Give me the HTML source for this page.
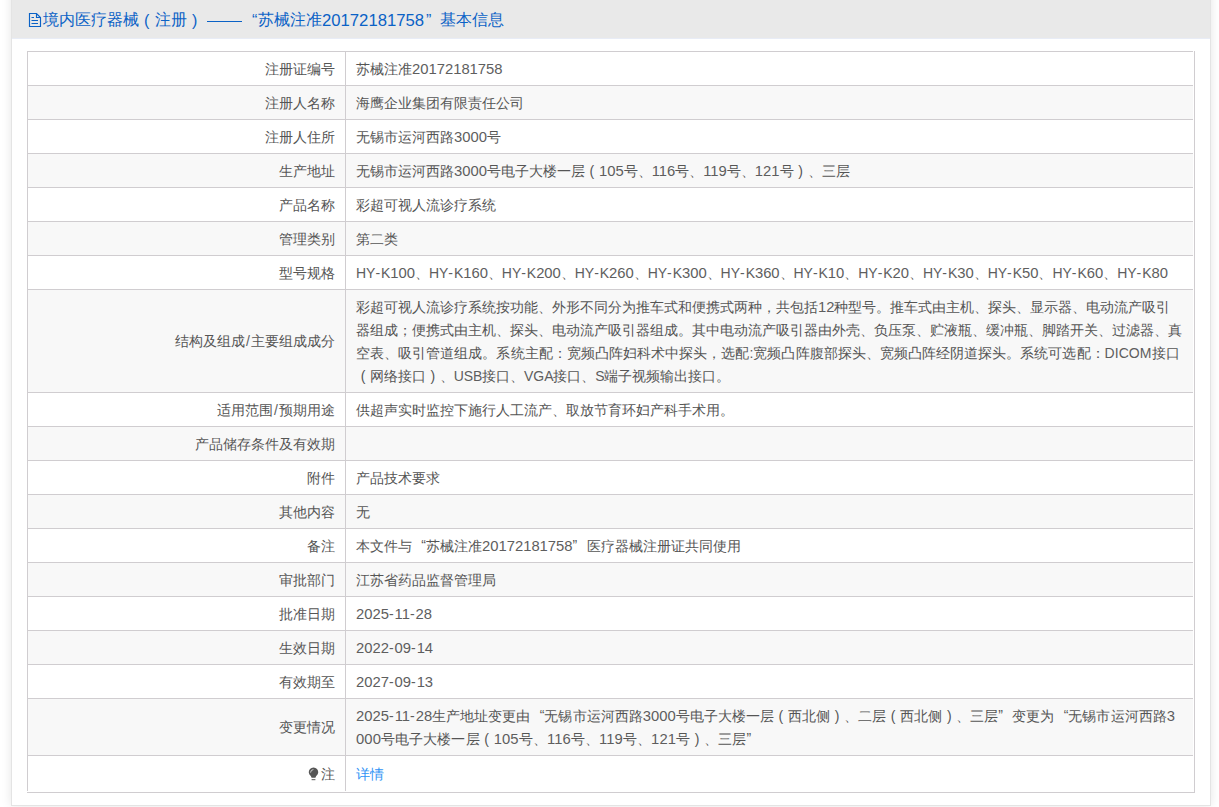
<!DOCTYPE html>
<html><head><meta charset="utf-8">
<style>
html,body{margin:0;padding:0;background:#fff;width:1219px;height:807px;overflow:hidden;font-family:"Liberation Sans",sans-serif;}
.panel{position:absolute;left:11px;top:-20px;width:1198px;height:824px;background:#fff;border:1px solid #e4e4e4;box-shadow:0 0 10px rgba(0,0,0,.1);}
.hdr{position:absolute;left:0;top:19px;width:1198px;height:38px;background:#e9e9e9;border-bottom:1px solid #e8ecf6;}
.ttl{position:absolute;left:-12px;top:0;width:1198px;height:38px;font-size:16px;color:#0b62c6;white-space:nowrap;}
.ttl>span{position:absolute;top:8px;line-height:24px;}
.doc{position:absolute;left:24px;top:8px;}
.tl{font-size:16px;}
.dash{left:207px;width:35px;top:21px !important;height:1.3px;background:#0b62c6;}
.tbl{position:absolute;left:27px;top:51px;width:1167px;height:741px;border-right:1px solid #d0cdd0;border-bottom:1px solid #d0cdd0;}
.row{position:absolute;left:0;width:1165px;border-top:1px solid #d0cdd0;border-left:1px solid #d0cdd0;}
.row.g{background:#f8f8f8;}
.lab{position:absolute;left:0;top:0;width:317px;height:100%;text-align:right;}
.val{position:absolute;left:317px;top:0;right:0;height:100%;border-left:1px solid #d0cdd0;}
.t{position:absolute;font-size:14px;color:#555;line-height:23px;white-space:nowrap;}
.lab .t{right:10px;top:6px;}
.val .t{left:10px;top:6px;}
.l{font-size:14.7px;}
.ql,.qr,.pl,.pr{display:inline-block;width:14px;}
.ql{text-align:right;}
.qr{text-align:left;}
.pl,.pr{text-align:center;}
.link{color:#2f93f5;}
.bulb{position:absolute;left:279px;top:10px;}
.d{font-size:14.8px;}
.h{letter-spacing:0.95px;}
.tl .d{font-size:16.7px;}

.tq{font-size:16px;}
.tp{font-size:16px;}
.ql,.qr{position:relative;top:-1px;}
.ttl>span.tl,.ttl>span.tq,.ttl>span.tp{top:9px;}
.sl{margin:0 1.2px;}
.t .a{color:#5e5e5e;}
.link .a{color:inherit}

</style></head><body>
<div class="panel">
 <div class="hdr"><div class="ttl">
<svg class="doc" width="24" height="24" viewBox="0 0 24 24"><path d="M5.5 5.5H12.5L16.5 9.5V18.5H5.5Z M12.5 5.5V9.5H16.5 M7.5 9.5H10 M7.5 12.5H14 M7.5 15.5H14" fill="none" stroke="#0b62c6" stroke-width="1.15"/></svg>
<span class="tt" style="left:43px">境内医疗器械</span>
<span class="tp" style="left:144px">(</span>
<span class="tt" style="left:155px">注册</span>
<span class="tp" style="left:192px">)</span>
<span class="dash"></span>
<span class="tq" style="left:252px">“</span>
<span class="tt" style="left:258px">苏械注准</span>
<span class="tl" style="left:322px"><span class="d">20172181758</span></span>
<span class="tq" style="left:426px">”</span>
<span class="tt" style="left:440px">基本信息</span>
</div></div>
</div>
<div class="tbl">
<div class="row" style="top:0px;height:33px"><div class="lab"><span class="t" style="top:6px">注册证编号</span></div><div class="val"><span class="t">苏械注准<span class="a"><span class="d">20172181758</span></span></span></div></div>
<div class="row g" style="top:34px;height:33px"><div class="lab"><span class="t" style="top:6px">注册人名称</span></div><div class="val"><span class="t">海鹰企业集团有限责任公司</span></div></div>
<div class="row" style="top:68px;height:33px"><div class="lab"><span class="t" style="top:6px">注册人住所</span></div><div class="val"><span class="t">无锡市运河西路<span class="a"><span class="d">3000</span></span>号</span></div></div>
<div class="row g" style="top:102px;height:33px"><div class="lab"><span class="t" style="top:6px">生产地址</span></div><div class="val"><span class="t">无锡市运河西路<span class="a"><span class="d">3000</span></span>号电子大楼一层<span class="pl">(</span><span class="a"><span class="d">105</span></span>号、<span class="a"><span class="d">116</span></span>号、<span class="a"><span class="d">119</span></span>号、<span class="a"><span class="d">121</span></span>号<span class="pr">)</span>、三层</span></div></div>
<div class="row" style="top:136px;height:33px"><div class="lab"><span class="t" style="top:6px">产品名称</span></div><div class="val"><span class="t">彩超可视人流诊疗系统</span></div></div>
<div class="row g" style="top:170px;height:33px"><div class="lab"><span class="t" style="top:6px">管理类别</span></div><div class="val"><span class="t">第二类</span></div></div>
<div class="row" style="top:204px;height:33px"><div class="lab"><span class="t" style="top:6px">型号规格</span></div><div class="val"><span class="t"><span style="letter-spacing:-0.03px"><span class="a">HY<span class="h">-</span>K<span class="d">100</span></span>、<span class="a">HY<span class="h">-</span>K<span class="d">160</span></span>、<span class="a">HY<span class="h">-</span>K<span class="d">200</span></span>、<span class="a">HY<span class="h">-</span>K<span class="d">260</span></span>、<span class="a">HY<span class="h">-</span>K<span class="d">300</span></span>、<span class="a">HY<span class="h">-</span>K<span class="d">360</span></span>、<span class="a">HY<span class="h">-</span>K<span class="d">10</span></span>、<span class="a">HY<span class="h">-</span>K<span class="d">20</span></span>、<span class="a">HY<span class="h">-</span>K<span class="d">30</span></span>、<span class="a">HY<span class="h">-</span>K<span class="d">50</span></span>、<span class="a">HY<span class="h">-</span>K<span class="d">60</span></span>、<span class="a">HY<span class="h">-</span>K<span class="d">80</span></span></span></span></div></div>
<div class="row g" style="top:238px;height:102px"><div class="lab"><span class="t" style="top:40px">结构及组成<span class="a"><span class="sl">/</span></span>主要组成成分</span></div><div class="val"><span class="t">彩超可视人流诊疗系统按功能、外形不同分为推车式和便携式两种，共包括<span class="a"><span class="d">12</span></span>种型号。推车式由主机、探头、显示器、电动流产吸引<br>器组成；便携式由主机、探头、电动流产吸引器组成。其中电动流产吸引器由外壳、负压泵、贮液瓶、缓冲瓶、脚踏开关、过滤器、真<br><span style="letter-spacing:0.05px">空表、吸引管道组成。系统主配：宽频凸阵妇科术中探头，选配<span class="a">:</span>宽频凸阵腹部探头、宽频凸阵经阴道探头。系统可选配：<span class="a">DICOM</span>接口</span><br><span style="letter-spacing:-0.07px"><span class="pl">(</span>网络接口<span class="pr">)</span>、<span class="a">USB</span>接口、<span class="a">VGA</span>接口、<span class="a">S</span>端子视频输出接口。</span></span></div></div>
<div class="row" style="top:341px;height:33px"><div class="lab"><span class="t" style="top:6px">适用范围<span class="a"><span class="sl">/</span></span>预期用途</span></div><div class="val"><span class="t">供超声实时监控下施行人工流产、取放节育环妇产科手术用。</span></div></div>
<div class="row g" style="top:375px;height:33px"><div class="lab"><span class="t" style="top:6px">产品储存条件及有效期</span></div><div class="val"><span class="t"></span></div></div>
<div class="row" style="top:409px;height:33px"><div class="lab"><span class="t" style="top:6px">附件</span></div><div class="val"><span class="t">产品技术要求</span></div></div>
<div class="row g" style="top:443px;height:33px"><div class="lab"><span class="t" style="top:6px">其他内容</span></div><div class="val"><span class="t">无</span></div></div>
<div class="row" style="top:477px;height:33px"><div class="lab"><span class="t" style="top:6px">备注</span></div><div class="val"><span class="t">本文件与<span class="ql">“</span>苏械注准<span class="a"><span class="d">20172181758</span></span><span class="qr">”</span>医疗器械注册证共同使用</span></div></div>
<div class="row g" style="top:511px;height:33px"><div class="lab"><span class="t" style="top:6px">审批部门</span></div><div class="val"><span class="t">江苏省药品监督管理局</span></div></div>
<div class="row" style="top:545px;height:33px"><div class="lab"><span class="t" style="top:6px">批准日期</span></div><div class="val"><span class="t"><span class="a"><span class="d">2025</span><span class="h">-</span><span class="d">11</span><span class="h">-</span><span class="d">28</span></span></span></div></div>
<div class="row g" style="top:579px;height:33px"><div class="lab"><span class="t" style="top:6px">生效日期</span></div><div class="val"><span class="t"><span class="a"><span class="d">2022</span><span class="h">-</span><span class="d">09</span><span class="h">-</span><span class="d">14</span></span></span></div></div>
<div class="row" style="top:613px;height:33px"><div class="lab"><span class="t" style="top:6px">有效期至</span></div><div class="val"><span class="t"><span class="a"><span class="d">2027</span><span class="h">-</span><span class="d">09</span><span class="h">-</span><span class="d">13</span></span></span></div></div>
<div class="row g" style="top:647px;height:56px"><div class="lab"><span class="t" style="top:17px">变更情况</span></div><div class="val"><span class="t"><span style="letter-spacing:0.03px"><span class="a"><span class="d">2025</span><span class="h">-</span><span class="d">11</span><span class="h">-</span><span class="d">28</span></span>生产地址变更由<span class="ql">“</span>无锡市运河西路<span class="a"><span class="d">3000</span></span>号电子大楼一层<span class="pl">(</span>西北侧<span class="pr">)</span>、二层<span class="pl">(</span>西北侧<span class="pr">)</span>、三层<span class="qr">”</span>变更为<span class="ql">“</span>无锡市运河西路<span class="a"><span class="d">3</span></span></span><br><span style="letter-spacing:0.1px"><span class="a"><span class="d">000</span></span>号电子大楼一层<span class="pl">(</span><span class="a"><span class="d">105</span></span>号、<span class="a"><span class="d">116</span></span>号、<span class="a"><span class="d">119</span></span>号、<span class="a"><span class="d">121</span></span>号<span class="pr">)</span>、三层<span class="qr">”</span></span></span></div></div>
<div class="row" style="top:704px;height:35px"><div class="lab"><svg class="bulb" width="14" height="16" viewBox="0 0 14 16"><path d="M3.8 10A4.7 4.7 0 1 1 9.2 10L8.4 11.8H4.6Z" fill="#555"/><rect x="4.6" y="13.1" width="3.8" height="1.1" fill="#666"/><path d="M3.6 6.6A3 3 0 0 1 6.4 3.6" fill="none" stroke="#ddd" stroke-width="0.9"/></svg><span class="t" style="top:7px">注</span></div><div class="val"><span class="t link" style="top:7px">详情</span></div></div>
</div>
</body></html>
